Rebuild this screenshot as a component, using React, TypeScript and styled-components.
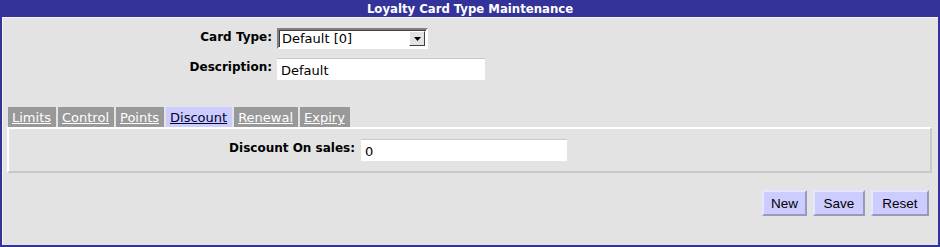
import React from "react";
import styled, { createGlobalStyle } from "styled-components";

const Global = createGlobalStyle`
  html, body { margin: 0; padding: 0; background: #e3e3e3; }
  * { box-sizing: border-box; }
`;

const Frame = styled.div`
  width: 940px;
  height: 247px;
  display: flex;
  flex-direction: column;
  border: 2px solid #333399;
  border-top: none;
  background: #e3e3e3;
  font-family: "DejaVu Sans", Verdana, sans-serif;
`;

const TitleBar = styled.div`
  height: 17px;
  background: #333399;
  color: #ffffff;
  font-family: "DejaVu Sans Condensed", "DejaVu Sans", sans-serif;
  font-weight: bold;
  font-size: 13px;
  line-height: 17px;
  text-align: center;
`;

const Body = styled.div`
  flex: 1;
  border-top: 1px solid #f4f4f4;
  border-left: 1px solid #f4f4f4;
  display: flex;
  flex-direction: column;
  padding: 10px 5px 0 4px;
`;

const FormGrid = styled.div<{ labelWidth: number; gap: number }>`
  display: grid;
  grid-template-columns: ${(p) => p.labelWidth}px auto;
  column-gap: ${(p) => p.gap}px;
  row-gap: 9px;
  align-items: center;
  justify-content: start;
`;

const Label = styled.label`
  text-align: right;
  font-weight: bold;
  font-size: 12px;
  color: #000;
  align-self: start;
  padding-top: 2px;
  white-space: nowrap;
`;

const TextInput = styled.div<{ w: number }>`
  width: ${(p) => p.w}px;
  height: 22px;
  background: #fff;
  border-top: 1px solid #c8c8c8;
  padding: 3px 4px 0 4px;
  font-size: 13px;
  color: #000;
  line-height: 18px;
`;

const SelectBox = styled.div`
  width: 151px;
  height: 21px;
  background: #fff;
  border: 2px solid;
  border-color: #808080 #ffffff #ffffff #808080;
  box-shadow: inset 1px 1px 0 #404040;
  display: flex;
  align-items: center;
  justify-content: space-between;
  padding: 0 1px 0 3px;
  font-size: 13px;
`;

const ArrowBtn = styled.div`
  width: 16px;
  height: 15px;
  background: #e3e3e3;
  border: 1px solid;
  border-color: #ffffff #404040 #404040 #ffffff;
  display: flex;
  align-items: center;
  justify-content: center;
`;

const TabBar = styled.div`
  display: flex;
  gap: 2px;
  margin-top: 27px;
  margin-left: 1px;
`;

const Tab = styled.a<{ active?: boolean }>`
  height: 20px;
  padding: 2px 5px 0 4px;
  background: ${(p) => (p.active ? "#ccccff" : "#999999")};
  color: ${(p) => (p.active ? "#000033" : "#ffffff")};
  text-decoration: underline;
  font-size: 13px;
  line-height: 17px;
  cursor: pointer;
`;

const Panel = styled.div`
  height: 46px;
  margin-right: 1px;
  border: 2px solid;
  border-color: #ffffff #c8c8c8 #c8c8c8 #ffffff;
  padding-top: 10px;
`;

const ButtonRow = styled.div`
  display: flex;
  justify-content: flex-end;
  gap: 6px;
  margin-top: 17px;
  padding-right: 4px;
`;

const Button = styled.button<{ w: number }>`
  width: ${(p) => p.w}px;
  height: 26px;
  padding: 0;
  background: #ccccff;
  border: 2px solid;
  border-color: #e6e6ff #9999bb #9999bb #e6e6ff;
  font-family: "Liberation Sans", Arial, sans-serif;
  font-size: 13.5px;
  color: #000;
`;

export default function App() {
  return (
    <>
      <Global />
      <Frame>
        <TitleBar>Loyalty Card Type Maintenance</TitleBar>
        <Body>
          <FormGrid labelWidth={265} gap={5}>
            <Label>Card Type:</Label>
            <SelectBox>
              <span>Default [0]</span>
              <ArrowBtn>
                <svg width="7" height="4" viewBox="0 0 7 4">
                  <polygon points="0,0 7,0 3.5,4" fill="#000" />
                </svg>
              </ArrowBtn>
            </SelectBox>
            <Label>Description:</Label>
            <TextInput w={208}>Default</TextInput>
          </FormGrid>
          <TabBar>
            <Tab>Limits</Tab>
            <Tab>Control</Tab>
            <Tab>Points</Tab>
            <Tab active>Discount</Tab>
            <Tab>Renewal</Tab>
            <Tab>Expiry</Tab>
          </TabBar>
          <Panel>
            <FormGrid labelWidth={346} gap={6}>
              <Label>Discount On sales:</Label>
              <TextInput w={206}>0</TextInput>
            </FormGrid>
          </Panel>
          <ButtonRow>
            <Button w={45}>New</Button>
            <Button w={52}>Save</Button>
            <Button w={58}>Reset</Button>
          </ButtonRow>
        </Body>
      </Frame>
    </>
  );
}
